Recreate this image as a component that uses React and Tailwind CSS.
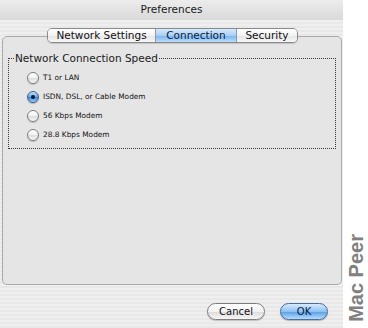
import React from 'react';

const speeds = ['T1 or LAN', 'ISDN, DSL, or Cable Modem', '56 Kbps Modem', '28.8 Kbps Modem'];

const Radio = ({ checked }) =>
    checked ? (
        <span className="w-[12px] h-[12px] rounded-full border border-[#3d5f93] bg-[linear-gradient(to_bottom,#c4def7_0%,#6aa6e6_50%,#3f86d8_55%,#9fd0fb_100%)] flex items-center justify-center shadow-[0_1px_1px_rgba(0,0,0,0.25)]">
            <span className="w-[4px] h-[4px] rounded-full bg-[#0d1a33]" />
        </span>
    ) : (
        <span className="w-[12px] h-[12px] rounded-full border border-[#7e7e7e] bg-[linear-gradient(to_bottom,#ffffff_0%,#f1f1f1_50%,#dedede_55%,#f6f6f6_100%)] shadow-[0_1px_1px_rgba(0,0,0,0.2)]" />
    );

const App = () => {
    return (
        <div className="w-[368px] h-[328px] flex bg-white overflow-hidden font-['DejaVu_Sans',sans-serif] text-[#111]">
            {/* Window */}
            <div className="w-[343px] flex flex-col bg-[repeating-linear-gradient(to_bottom,#efefef_0px,#efefef_2px,#e8e8e8_2px,#e8e8e8_4px)]">
                {/* Title bar */}
                <div className="h-[20px] flex items-center justify-center text-[10.5px] text-[#1a1a1a] bg-[linear-gradient(to_bottom,#ececec,#d9d9d9)] rounded-tr-[4px]">
                    Preferences
                </div>

                <div className="flex-1 flex flex-col pl-[2px] pr-[1px]">
                    {/* Tabs */}
                    <div className="mt-[8px] h-[15px] flex justify-center relative z-10 ml-[1px]">
                        <div className="flex h-[15px] rounded-[5px] border border-[#8a8a8a] overflow-hidden text-[10.5px] leading-none shadow-[0_1px_1px_rgba(0,0,0,0.15)]">
                            <div className="w-[108px] flex items-center justify-center bg-[linear-gradient(to_bottom,#ffffff,#f3f3f3_50%,#e6e6e6_55%,#f7f7f7)] border-r border-[#9a9a9a]">
                                Network Settings
                            </div>
                            <div className="w-[81px] flex items-center justify-center text-[#0b1b3d] bg-[linear-gradient(to_bottom,#d7eafc,#a9cff5_50%,#7fb6ee_55%,#b9ddfb)] border-r border-[#7c9cc6]">
                                Connection
                            </div>
                            <div className="w-[60px] flex items-center justify-center bg-[linear-gradient(to_bottom,#ffffff,#f3f3f3_50%,#e6e6e6_55%,#f7f7f7)]">
                                Security
                            </div>
                        </div>
                    </div>

                    {/* Tab panel */}
                    <div className="-mt-[7px] h-[249px] border border-[#ababab] rounded-[5px] bg-[#e5e5e5] px-[5px] pt-[15px]">
                        <fieldset className="border border-dotted border-[#3a3a3a]">
                            <legend className="ml-[5px] px-[1px] text-[10.5px] leading-[12px] text-[#1a1a1a]">
                                Network Connection Speed
                            </legend>
                            <div className="flex flex-col pl-[18px] pt-[4px] pb-[4px]">
                                {speeds.map((label, i) => (
                                    <div key={label} className="h-[19px] flex items-center gap-[4px]">
                                        <Radio checked={i === 1} />
                                        <span className="text-[7.4px] text-[#111]">{label}</span>
                                    </div>
                                ))}
                            </div>
                        </fieldset>
                    </div>

                    {/* Buttons */}
                    <div className="mt-[18px] h-[17px] flex justify-end gap-[15px] pr-[14px] text-[10px]">
                        <button className="w-[58px] h-[17px] rounded-full border border-[#7d7d7d] bg-[linear-gradient(to_bottom,#ffffff,#f2f2f2_50%,#dedede_55%,#f5f5f5)] shadow-[0_1px_1px_rgba(0,0,0,0.2)] flex items-center justify-center">
                            Cancel
                        </button>
                        <button className="w-[48px] h-[17px] rounded-full border border-[#4c6c9c] bg-[linear-gradient(to_bottom,#d6eafd,#8fc2f3_50%,#5ea2e8_55%,#b5ddfc)] shadow-[0_1px_1px_rgba(0,0,0,0.25)] flex items-center justify-center text-[#0b1b3d]">
                            OK
                        </button>
                    </div>
                </div>
            </div>

            {/* Watermark */}
            <div className="flex-1 flex items-end justify-center pb-[6px]">
                <span className="[writing-mode:vertical-rl] rotate-180 font-['Liberation_Sans',sans-serif] font-bold text-[20px] leading-none text-[#808080]">
                    Mac Peer
                </span>
            </div>
        </div>
    );
};

export default App;
